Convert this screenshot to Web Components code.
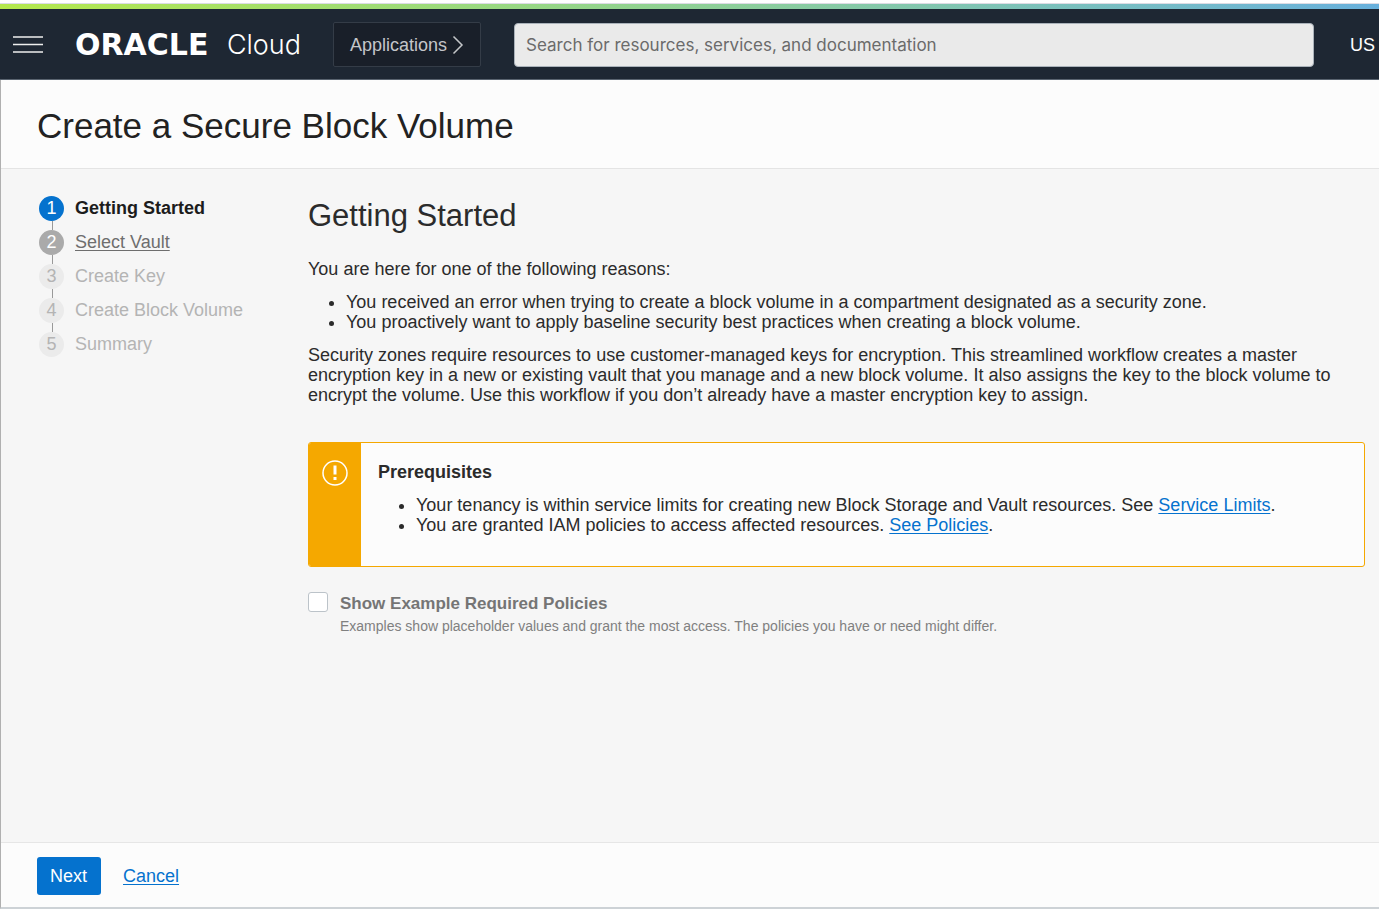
<!DOCTYPE html>
<html lang="en">
<head>
<meta charset="utf-8">
<title>Create a Secure Block Volume</title>
<style>
  html { background: #fff; }
  body {
    margin: 0;
    font: 18px/20px "Liberation Sans", Arial, sans-serif;
    color: #2b2b2b;
  }
</style>
</head>
<body>
<cloud-page>
  <cloud-header slot="header" region="US"></cloud-header>
  <page-title slot="title">Create a Secure Block Volume</page-title>
  <step-list slot="steps">
    <step-item number="1" state="current">Getting Started</step-item>
    <step-item number="2" state="next">Select Vault</step-item>
    <step-item number="3">Create Key</step-item>
    <step-item number="4">Create Block Volume</step-item>
    <step-item number="5">Summary</step-item>
  </step-list>
  <getting-started></getting-started>
  <wizard-actions slot="actions"></wizard-actions>
</cloud-page>

<script>
class BaseElement extends HTMLElement {
  connectedCallback() {
    if (this.shadowRoot) return;
    this.attachShadow({ mode: "open" }).innerHTML = this.render();
  }
}

customElements.define("cloud-page", class extends BaseElement {
  render() {
    return `
      <style>
        :host {
          display: flex; flex-direction: column; box-sizing: border-box;
          min-height: 100vh; padding: 3px 5px 7px 0;
        }
        .frame {
          flex: 1; display: flex; flex-direction: column;
          border-left: 1px solid #b0b0b0; border-bottom: 2px solid #cdd2d6;
          background: #f6f6f6;
        }
        .content {
          flex: 1; display: grid; grid-template-columns: 271px minmax(0, 1fr);
          padding: 25px 14px 24px 36px;
        }
      </style>
      <slot name="header"></slot>
      <div class="frame">
        <slot name="title"></slot>
        <div class="content">
          <slot name="steps"></slot>
          <main><slot></slot></main>
        </div>
        <slot name="actions"></slot>
      </div>`;
  }
});

customElements.define("cloud-header", class extends BaseElement {
  render() {
    return `
      <style>
        :host { display: block; color: #fff; background: #1e2733; border-bottom: 1px solid #59636f; }
        .stripe { height: 5px; border-top: 1px solid #dcdce4; background: linear-gradient(90deg, #b4e84c, #98d880 36%, #7cc2b8 74%, #68b0dc); }
        header { display: flex; align-items: center; box-sizing: border-box; height: 70px; padding: 1px 4px 0 12px; white-space: nowrap; }
        button { font: inherit; color: inherit; cursor: pointer; }
        .menu { display: flex; padding: 0; border: 0; background: none; }
        .logo { display: flex; align-items: center; margin-left: 31px; width: 226px; line-height: 32px; }
        .oracle { width: 154px; font-family: "DejaVu Sans", sans-serif; font-size: 30px; font-weight: 700; }
        .cloud { font-family: Inter, sans-serif; font-size: 27px; font-weight: 300; }
        .apps {
          display: flex; align-items: center; gap: 5px; height: 45px; margin-left: 32px; padding: 0 16px;
          border: 1px solid #343c47; border-radius: 2px; background: #191f29; color: #c4c6c9;
        }
        input {
          flex: 1; min-width: 0; box-sizing: border-box; height: 44px; margin: 0 36px 0 33px; padding: 0 11px;
          border: 1px solid #aab2ba; border-radius: 4px; background: #eaeaea; font: 17px Inter, sans-serif;
        }
        input::placeholder { color: #6b6b6b; opacity: 1; }
      </style>
      <div class="stripe"></div>
      <header>
        <button class="menu" aria-label="Menu">
          <svg width="32" height="20" viewBox="0 0 32 20" stroke="#eee" stroke-width="1.5"><path d="M1 2h30M1 9.500h30M1 17h30"/></svg>
        </button>
        <div class="logo"><span class="oracle">ORACLE</span><span class="cloud">Cloud</span></div>
        <button class="apps">Applications
          <svg width="12" height="20" viewBox="0 0 12 20" fill="none" stroke="#c4c6c9" stroke-width="1.500"><path d="M1.500 1.500 10 10 1.500 18.500"/></svg>
        </button>
        <input type="search" aria-label="Search" placeholder="Search for resources, services, and documentation">
        <span>${this.getAttribute("region")}</span>
      </header>`;
  }
});

customElements.define("page-title", class extends BaseElement {
  render() {
    return `
      <style>
        :host { display: block; padding: 26px 36px 22px; background: #fcfcfc; border-bottom: 1px solid #e4e4e4; }
        h1 { margin: 0; font-size: 35px; line-height: 40px; font-weight: 400; color: #222; }
      </style>
      <h1><slot></slot></h1>`;
  }
});

customElements.define("step-list", class extends BaseElement {
  render() {
    return `
      <style>
        :host { display: block; padding: 2px; }
        nav { display: flex; flex-direction: column; gap: 9px; }
      </style>
      <nav aria-label="Steps"><slot></slot></nav>`;
  }
});

customElements.define("step-item", class extends BaseElement {
  render() {
    const label = this.getAttribute("state") === "next"
      ? `<a href="#select-vault"><slot></slot></a>` : `<span><slot></slot></span>`;
    return `
      <style>
        :host { display: flex; align-items: center; gap: 11px; position: relative; color: #b4b4b4; line-height: 25px; }
        .dot { width: 25px; height: 25px; border-radius: 50%; text-align: center; background: #ebebeb; }
        :host([state="current"]) { color: #1c1c1c; font-weight: 700; }
        :host([state="current"]) .dot { color: #fff; background: #0572ce; font-weight: 400; }
        :host([state="next"]) { color: #6e6e6e; }
        :host([state="next"]) .dot { color: #fff; background: #aaa; }
        :host(:not(:last-child))::after {
          content: ""; position: absolute; left: 13px; top: 100%; width: 1px; height: 9px; background: #999;
        }
        a { color: inherit; text-decoration-thickness: 1px; text-underline-offset: 2px; }
      </style>
      <span class="dot">${this.getAttribute("number")}</span>${label}`;
  }
});

customElements.define("notice-box", class extends BaseElement {
  render() {
    return `
      <style>
        :host { display: flex; border: 1px solid #f5a800; border-radius: 3px; background: #fcfcfc; overflow: hidden; }
        .side { flex: none; width: 52px; padding-top: 16px; background: #f5a800; text-align: center; }
        .body { padding: 19px 17px 31px; }
      </style>
      <div class="side">
        <svg width="28" height="28" viewBox="0 0 28 28" fill="none" stroke="#fff"><circle cx="14" cy="14" r="12" stroke-width="1.500"/><path d="M14 6.500v9M14 18v3" stroke-width="3"/></svg>
      </div>
      <div class="body"><slot></slot></div>`;
  }
});

customElements.define("check-field", class extends BaseElement {
  render() {
    return `
      <style>
        :host { display: flex; gap: 12px; color: #808080; }
        input {
          appearance: none; flex: none; width: 20px; height: 20px; margin: 0;
          border: 1px solid #bcc3c9; border-radius: 3px; background: #fff;
        }
        label { display: block; padding-top: 2px; font-size: 17px; font-weight: 700; color: #757575; }
        p { margin: 2px 0 0; font-size: 14px; }
      </style>
      <input type="checkbox" id="box" aria-describedby="hint">
      <div>
        <label for="box"><slot></slot></label>
        <p id="hint"><slot name="hint"></slot></p>
      </div>`;
  }
});

customElements.define("getting-started", class extends BaseElement {
  render() {
    return `
      <style>
        :host { display: block; }
        h2 { margin: 4px 0 25px; font-size: 31px; line-height: 36px; font-weight: 400; }
        h3 { margin: 0; font-size: inherit; line-height: inherit; }
        p { margin: 0; }
        ul { margin: 13px 0; padding-left: 38px; }
        notice-box { margin-top: 37px; }
        notice-box ul { margin-bottom: 0; }
        check-field { margin-top: 25px; }
        a { color: #0572ce; text-decoration-thickness: 1px; text-underline-offset: 2px; }
      </style>
      <h2>Getting Started</h2>
      <p>You are here for one of the following reasons:</p>
      <ul>
        <li>You received an error when trying to create a block volume in a compartment designated as a security zone.</li>
        <li>You proactively want to apply baseline security best practices when creating a block volume.</li>
      </ul>
      <p>Security zones require resources to use customer-managed keys for encryption. This streamlined workflow creates a master encryption key in a new or existing vault that you manage and a new block volume. It also assigns the key to the block volume to encrypt the volume. Use this workflow if you don’t already have a master encryption key to assign.</p>
      <notice-box>
        <h3>Prerequisites</h3>
        <ul>
          <li>Your tenancy is within service limits for creating new Block Storage and Vault resources. See <a href="#limits">Service Limits</a>.</li>
          <li>You are granted IAM policies to access affected resources. <a href="#policies">See Policies</a>.</li>
        </ul>
      </notice-box>
      <check-field>Show Example Required Policies<span slot="hint">Examples show placeholder values and grant the most access. The policies you have or need might differ.</span></check-field>`;
  }
});

customElements.define("wizard-actions", class extends BaseElement {
  render() {
    return `
      <style>
        :host { display: flex; align-items: center; gap: 22px; padding: 14px 36px 12px; background: #fcfcfc; border-top: 1px solid #e6e6e6; }
        button { height: 38px; padding: 0 14px 0 13px; border: 0; border-radius: 3px; background: #0572ce; color: #fff; font: inherit; cursor: pointer; }
        a { color: #0572ce; text-decoration-thickness: 1px; text-underline-offset: 2px; }
      </style>
      <button>Next</button>
      <a href="#cancel">Cancel</a>`;
  }
});
</script>
</body>
</html>
